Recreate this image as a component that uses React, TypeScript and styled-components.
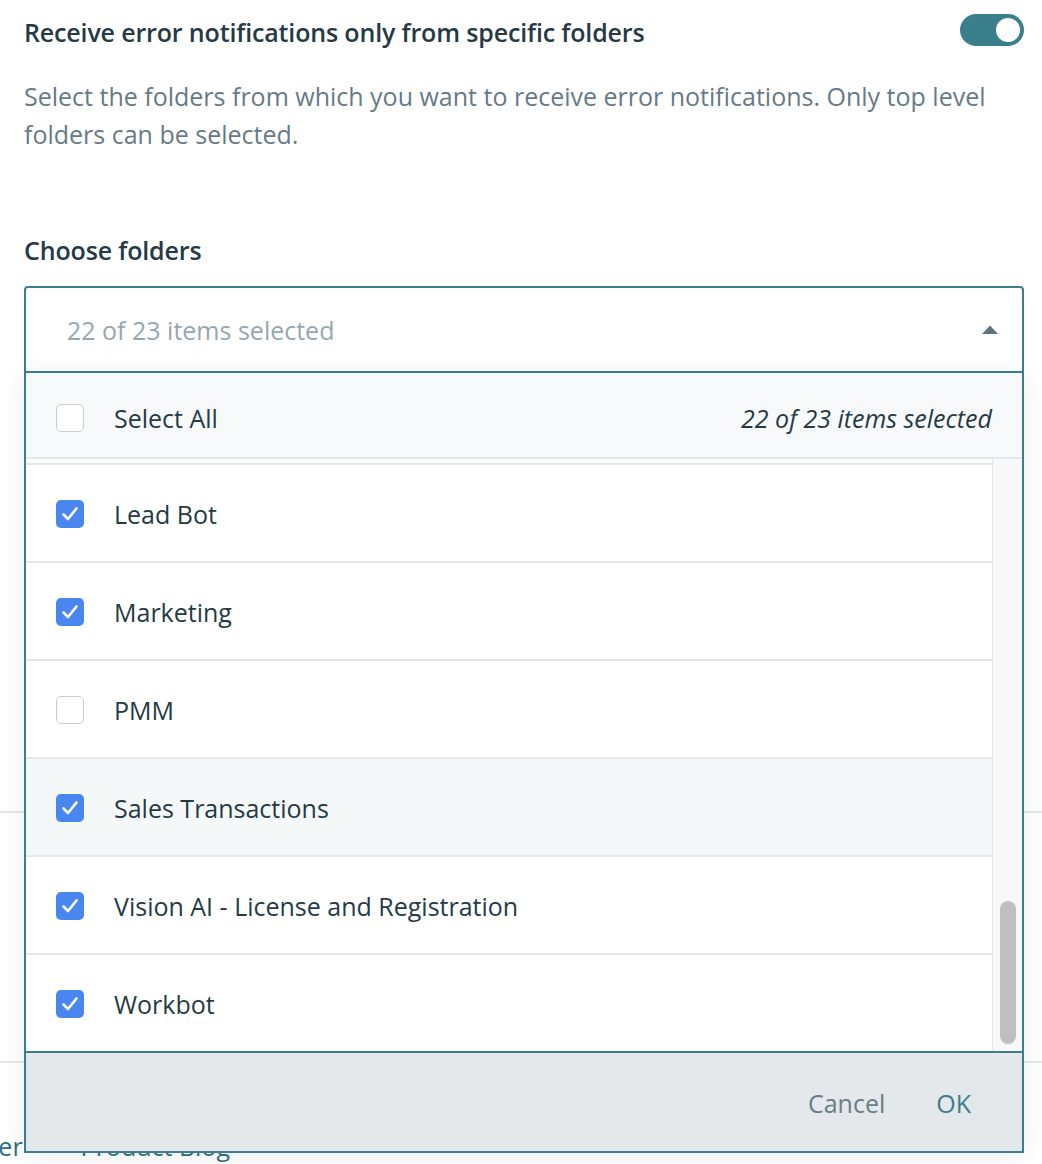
import React, { useLayoutEffect, useRef } from "react";
import styled, { createGlobalStyle } from "styled-components";

const GlobalStyle = createGlobalStyle`
  html, body { margin: 0; padding: 0; background: #ffffff; }
  body {
    font-family: "Open Sans", "Lato", "Liberation Sans", sans-serif;
    color: #263a45;
    -webkit-font-smoothing: antialiased;
    overflow: hidden;
  }
  * { box-sizing: border-box; }
`;

const TEAL = "#3a7f8b";

const Page = styled.div`
  width: 1042px;
  height: 1164px;
  overflow: hidden;
  position: relative;
`;

const Content = styled.div`
  padding: 14px 18px 0 24px;
`;

const HeaderRow = styled.div`
  display: flex;
  align-items: center;
  justify-content: space-between;
  height: 32px;
`;

const Title = styled.h2`
  margin: 0;
  font-size: 25px;
  line-height: 32px;
  font-weight: 600;
  color: #253a45;
  padding-top: 4px;
  letter-spacing: -0.15px;
`;

const Toggle = styled.div<{ $on: boolean }>`
  width: 64px;
  height: 32px;
  border-radius: 16px;
  background: ${(p) => (p.$on ? TEAL : "#c9d1d6")};
  display: flex;
  align-items: center;
  justify-content: ${(p) => (p.$on ? "flex-end" : "flex-start")};
  padding: 0 4px;
`;

const Knob = styled.div`
  width: 24px;
  height: 24px;
  border-radius: 50%;
  background: #ffffff;
`;

const Description = styled.p`
  margin: 32px 0 0;
  font-size: 25px;
  line-height: 37.5px;
  color: #677a86;
  max-width: 990px;
`;

const Label = styled.div`
  margin-top: 81px;
  font-size: 25px;
  line-height: 32px;
  font-weight: 600;
  color: #253a45;
  letter-spacing: -0.15px;
`;

const SelectWrap = styled.div`
  position: relative;
  margin-top: 20px;
  width: 1000px;
  z-index: 2;
`;

const Field = styled.div`
  height: 87px;
  border: 2px solid ${TEAL};
  border-radius: 4px 4px 0 0;
  display: flex;
  align-items: center;
  justify-content: space-between;
  padding: 0 24px 0 41px;
  background: #ffffff;
`;

const Placeholder = styled.span`
  font-size: 25px;
  color: #98a6ae;
`;

const Caret = styled.svg`
  width: 16px;
  height: 9px;
  display: block;
`;

const Panel = styled.div`
  position: absolute;
  top: 100%;
  left: 0;
  right: 0;
  background: #ffffff;
  border: 2px solid ${TEAL};
  border-top: none;
  box-shadow: 0 2px 22px rgba(40, 60, 70, 0.09);
`;

const PanelHeader = styled.div`
  height: 86px;
  background: #f8f9fb;
  border-bottom: 2px solid #e5e8eb;
  display: flex;
  align-items: center;
  padding: 6px 30px 0 30px;
`;

const CountNote = styled.span`
  margin-left: auto;
  font-size: 25px;
  font-style: italic;
  color: #263a45;
`;

const ItemLabel = styled.span`
  font-size: 25px;
  color: #263a45;
  margin-left: 30px;
`;

const Box = styled.span<{ $checked: boolean }>`
  width: 28px;
  height: 28px;
  border-radius: 5px;
  flex: none;
  display: flex;
  align-items: center;
  justify-content: center;
  background: ${(p) => (p.$checked ? "#4a86ef" : "#ffffff")};
  border: ${(p) => (p.$checked ? "none" : "1.5px solid #c9cbcd")};
`;

const ListArea = styled.div`
  height: 592px;
  display: flex;
`;

const Viewport = styled.div`
  flex: 1;
  overflow: hidden;
`;

const Track = styled.div`
  width: 30px;
  flex: none;
  background: #f8f8f8;
  border-left: 1px solid #e6e6e6;
  display: flex;
  flex-direction: column;
  justify-content: flex-end;
  padding: 0 6px 7px 7px;
`;

const Thumb = styled.div`
  height: 143px;
  border-radius: 8px;
  background: #bfbfbf;
`;

const Row = styled.div<{ $hover?: boolean }>`
  height: 98px;
  border-top: 2px solid #e5e8eb;
  display: flex;
  align-items: center;
  padding: 2px 0 0 30px;
  background: ${(p) => (p.$hover ? "#f5f8f9" : "#ffffff")};
`;

const Footer = styled.div`
  height: 100px;
  border-top: 2px solid ${TEAL};
  background: #e4e8eb;
  display: flex;
  align-items: center;
  justify-content: flex-end;
  gap: 51px;
  padding: 2px 51px 0 0;
`;

const FooterButton = styled.button<{ $primary?: boolean }>`
  background: none;
  border: none;
  padding: 0;
  font-family: inherit;
  font-size: 25px;
  color: ${(p) => (p.$primary ? TEAL : "#6a7d89")};
  cursor: pointer;
`;

const BackSection = styled.div<{ $h: number }>`
  height: ${(p) => p.$h}px;
  border-bottom: 2px solid #e6e9ec;
`;

const LinksRow = styled.div`
  display: flex;
  gap: 58px;
  margin-left: -97px;
  margin-top: 66px;
  font-size: 25px;
  color: #2f6f7a;
`;

const Check = () => (
  <svg width="22" height="22" viewBox="0 0 22 22" fill="none">
    <path
      d="M4.5 11.5 L9 16 L17.5 5.5"
      stroke="#ffffff"
      strokeWidth="2.6"
      strokeLinecap="round"
      strokeLinejoin="round"
    />
  </svg>
);

const items: { name: string; checked: boolean }[] = [
  "Accounting",
  "Analytics",
  "Billing",
  "Customer Success",
  "Data Pipelines",
  "DevOps",
  "Engineering",
  "Finance",
  "Growth",
  "HR Onboarding",
  "Integrations",
  "Invoicing",
  "IT Operations",
  "Jira Sync",
  "Knowledge Base",
  "Lab Experiments",
  "Launch Plans",
  "Lead Bot",
  "Marketing",
  "PMM",
  "Sales Transactions",
  "Vision AI - License and Registration",
  "Workbot",
].map((name) => ({ name, checked: name !== "PMM" }));

export default function App() {
  const viewRef = useRef<HTMLDivElement>(null);
  useLayoutEffect(() => {
    if (viewRef.current) viewRef.current.scrollTop = viewRef.current.scrollHeight;
  }, []);

  return (
    <Page>
      <GlobalStyle />
      <Content>
        <HeaderRow>
          <Title>Receive error notifications only from specific folders</Title>
          <Toggle $on>
            <Knob />
          </Toggle>
        </HeaderRow>
        <Description>
          Select the folders from which you want to receive error notifications. Only top level
          folders can be selected.
        </Description>
        <Label>Choose folders</Label>
        <SelectWrap>
          <Field>
            <Placeholder>22 of 23 items selected</Placeholder>
            <Caret viewBox="0 0 16 9">
              <path d="M0 9 L8 0.5 L16 9 Z" fill="#5d7380" />
            </Caret>
          </Field>
          <Panel>
            <PanelHeader>
              <Box $checked={false} />
              <ItemLabel>Select All</ItemLabel>
              <CountNote>22 of 23 items selected</CountNote>
            </PanelHeader>
            <ListArea>
              <Viewport ref={viewRef}>
                {items.map((it) => (
                  <Row key={it.name} $hover={it.name === "Sales Transactions"}>
                    <Box $checked={it.checked}>{it.checked && <Check />}</Box>
                    <ItemLabel>{it.name}</ItemLabel>
                  </Row>
                ))}
              </Viewport>
              <Track>
                <Thumb />
              </Track>
            </ListArea>
            <Footer>
              <FooterButton>Cancel</FooterButton>
              <FooterButton $primary>OK</FooterButton>
            </Footer>
          </Panel>
        </SelectWrap>
      </Content>
      <BackSection $h={440} />
      <BackSection $h={250} />
      <LinksRow>
        <span>Developer</span>
        <span>Product Blog</span>
      </LinksRow>
    </Page>
  );
}
